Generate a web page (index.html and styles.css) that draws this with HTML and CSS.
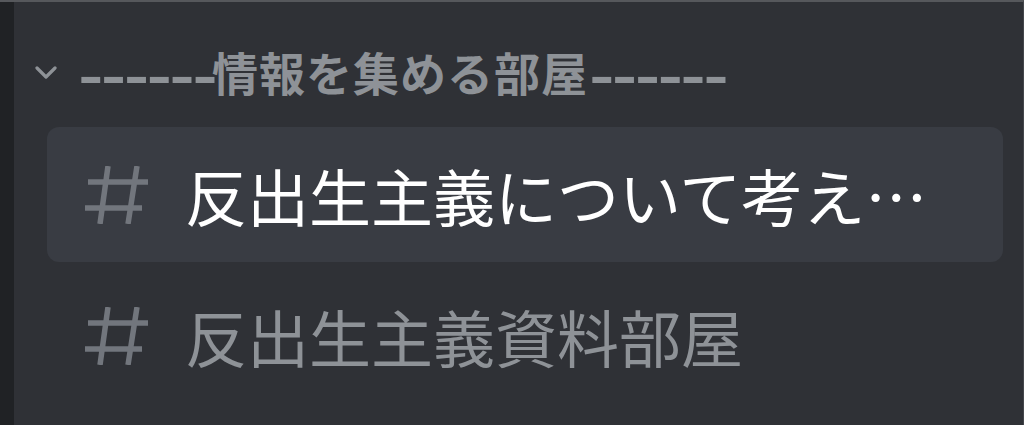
FILE: index.html
```html
<!DOCTYPE html>
<html lang="ja">
<head>
<meta charset="utf-8">
<link rel="stylesheet" href="styles.css">
</head>
<body>
<div class="app">
  <div class="rail"></div>
  <main class="sidebar">
    <div class="category">
      <svg class="chevron" width="22" height="14" viewBox="0 0 22 14"><path d="M2 2 L11 11 L20 2" fill="none" stroke="#8e9297" stroke-width="3.2" stroke-linecap="round" stroke-linejoin="round"/></svg>
      <span class="cat-name"><span class="dashes"><span class="dash-ink">------</span></span>情報を集める部屋<span class="dashes trail"><span class="dash-ink">------</span></span></span>
    </div>
    <ul class="channels">
      <li class="channel selected">
        <svg class="hash" width="64" height="58" viewBox="0 0 64 58"><path d="M23 0 L15 58 M52 0 L43 58 M3 16 H63 M0 42 H57" fill="none" stroke="#72767d" stroke-width="5.5"/></svg>
        <span class="name">反出生主義について考え…</span>
      </li>
      <li class="channel">
        <svg class="hash" width="64" height="58" viewBox="0 0 64 58"><path d="M23 0 L15 58 M52 0 L43 58 M3 16 H63 M0 42 H57" fill="none" stroke="#72767d" stroke-width="5.5"/></svg>
        <span class="name">反出生主義資料部屋</span>
      </li>
    </ul>
  </main>
</div>
</body>
</html>
```
FILE: styles.css
```css
html, body {
  margin: 0;
  padding: 0;
  height: 100%;
  background: #2f3136;
}
.app {
  display: flex;
  height: 425px;
  box-sizing: border-box;
  border-top: 2px solid #56585c;
  border-right: 1px solid #44464b;
  font-family: "Noto Sans CJK JP", "Noto Sans", sans-serif;
}
.rail {
  width: 14px;
  flex: none;
  background: #202225;
}
.sidebar {
  flex: 1;
  display: flex;
  flex-direction: column;
  padding-top: 44px;
}
.category {
  display: flex;
  align-items: center;
  height: 50px;
  padding-left: 21px;
  gap: 21px;
}
.chevron {
  flex: none;
  margin-top: 4px;
}
.cat-name {
  font-size: 46px;
  font-weight: 700;
  color: #8e9297;
  line-height: 50px;
  letter-spacing: 1px;
  white-space: nowrap;
}
.dashes {
  display: inline-block;
  width: 134px;
  letter-spacing: 0;
  vertical-align: top;
}
.dashes.trail {
  margin-left: 1px;
}
.dash-ink {
  display: inline-block;
  transform: scale(1.5, 1.25);
  transform-origin: left center;
  letter-spacing: -1.8px;
}
.channels {
  list-style: none;
  margin: 31px 20px 0 33px;
  padding: 0;
  display: flex;
  flex-direction: column;
  gap: 6px;
}
.channel {
  display: flex;
  align-items: center;
  height: 135px;
  border-radius: 12px;
  padding-left: 38px;
  gap: 36px;
}
.channel.selected {
  background: #393c43;
}
.hash {
  flex: none;
}
.name {
  font-size: 62px;
  line-height: 1;
  color: #8e9297;
  white-space: nowrap;
}
.selected .name {
  color: #ffffff;
}
```
